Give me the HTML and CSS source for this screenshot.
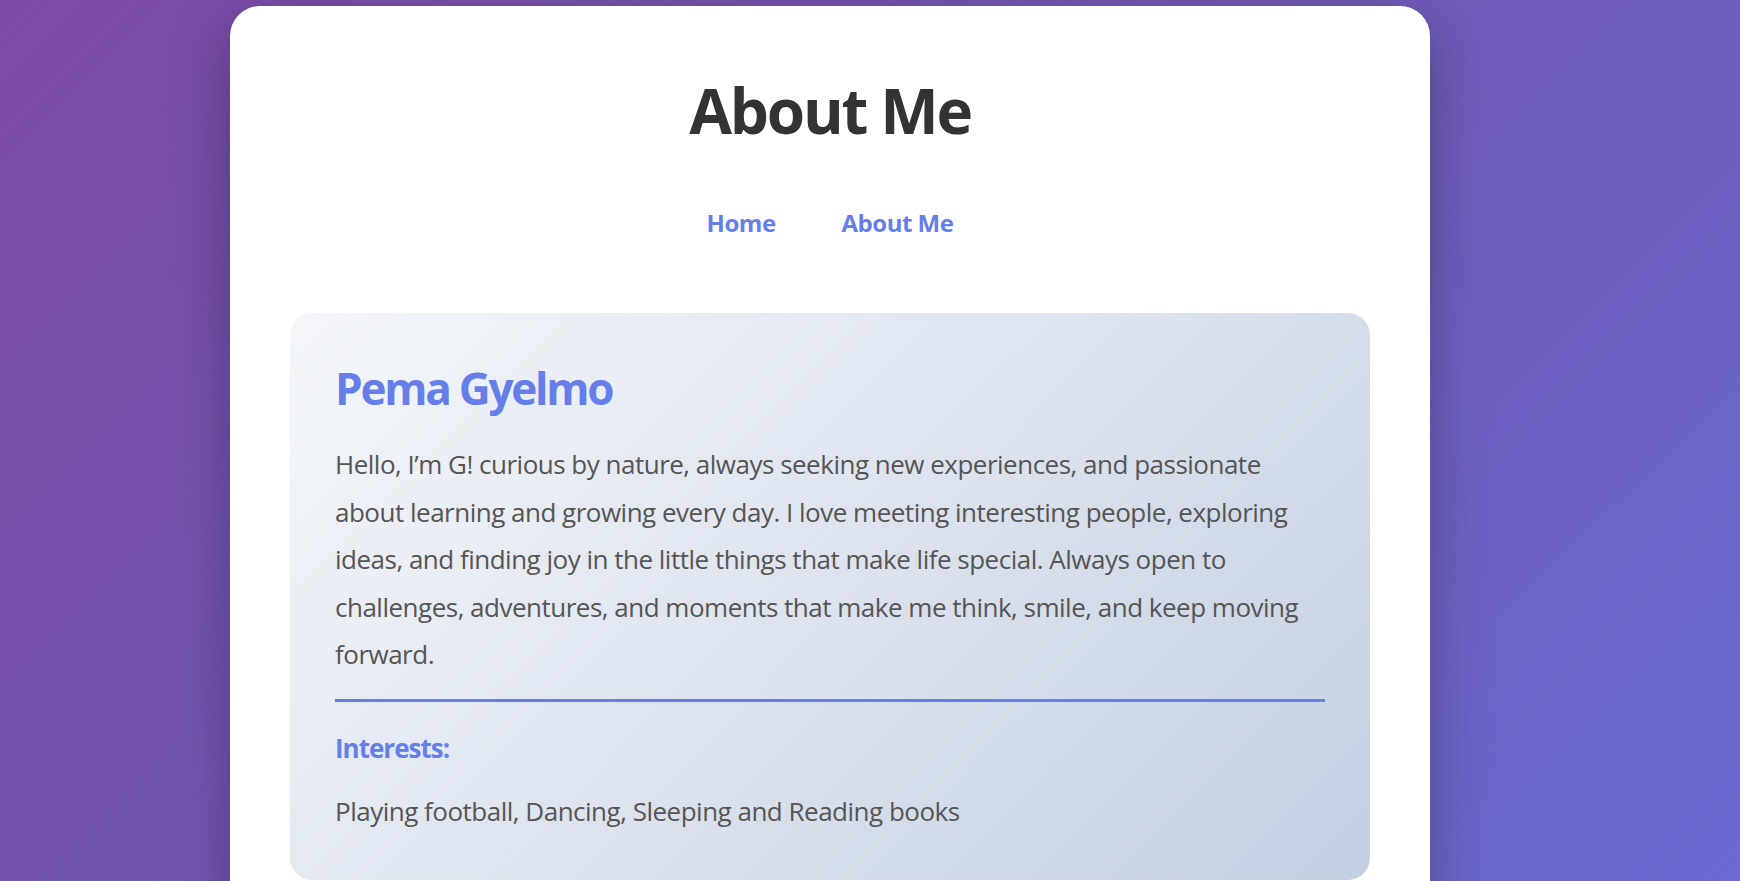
FILE: index.html
```html
<!DOCTYPE html>
<html lang="en">
<head>
<meta charset="utf-8">
<title>About Me</title>
<link rel="stylesheet" href="styles.css">
</head>
<body>
<div class="page">
  <main class="card">
    <h1 class="title">About Me</h1>
    <nav class="nav">
      <a class="nav-link" href="#">Home</a>
      <a class="nav-link" href="#">About Me</a>
    </nav>
    <section class="profile">
      <h2 class="name">Pema Gyelmo</h2>
      <p class="bio">Hello, I’m G! curious by nature, always seeking new experiences, and passionate about learning and growing every day. I love meeting interesting people, exploring ideas, and finding joy in the little things that make life special. Always open to challenges, adventures, and moments that make me think, smile, and keep moving forward.</p>
      <h3 class="label">Interests:</h3>
      <p class="interests">Playing football, Dancing, Sleeping and Reading books</p>
    </section>
  </main>
</div>
</body>
</html>
```
FILE: styles.css
```css
html, body {
  margin: 0;
  padding: 0;
}
body {
  min-height: 100vh;
  background: linear-gradient(135deg, #7a4aa6 0%, #7157b3 45%, #6a6bd2 100%);
  font-family: "Open Sans", "Noto Sans", sans-serif;
  overflow: hidden;
}
.page {
  padding: 6px 0 0 230px;
}
.card {
  width: 1200px;
  box-sizing: border-box;
  background: #ffffff;
  border-radius: 30px;
  padding: 66px 60px 60px;
  box-shadow: 0 20px 60px rgba(0, 0, 0, 0.3);
}
.title {
  margin: 0;
  font-size: 62px;
  line-height: 76px;
  font-weight: 700;
  letter-spacing: -2.2px;
  color: #333333;
  text-align: center;
}
.nav {
  display: flex;
  justify-content: center;
  gap: 66px;
  margin-top: 57px;
}
.nav-link {
  font-size: 24px;
  line-height: 36px;
  font-weight: 700;
  letter-spacing: -0.5px;
  color: #667eea;
  text-decoration: none;
}
.profile {
  margin-top: 72px;
  background: linear-gradient(135deg, #f5f7fa 0%, #c3cfe2 100%);
  border-radius: 22px;
  padding: 48px 45px 45px;
}
.name {
  margin: 0 0 26px;
  font-size: 44px;
  line-height: 54px;
  font-weight: 700;
  letter-spacing: -2.2px;
  color: #667eea;
}
.bio {
  margin: 0;
  padding-bottom: 20px;
  border-bottom: 3px solid #667eea;
  font-size: 26px;
  line-height: 47.6px;
  letter-spacing: -0.5px;
  color: #555555;
}
.label {
  margin: 26px 0 0;
  font-size: 26px;
  line-height: 40px;
  font-weight: 700;
  letter-spacing: -1px;
  color: #667eea;
}
.interests {
  margin: 20px 0 0;
  font-size: 26px;
  line-height: 47.5px;
  letter-spacing: -0.5px;
  color: #555555;
}
```
